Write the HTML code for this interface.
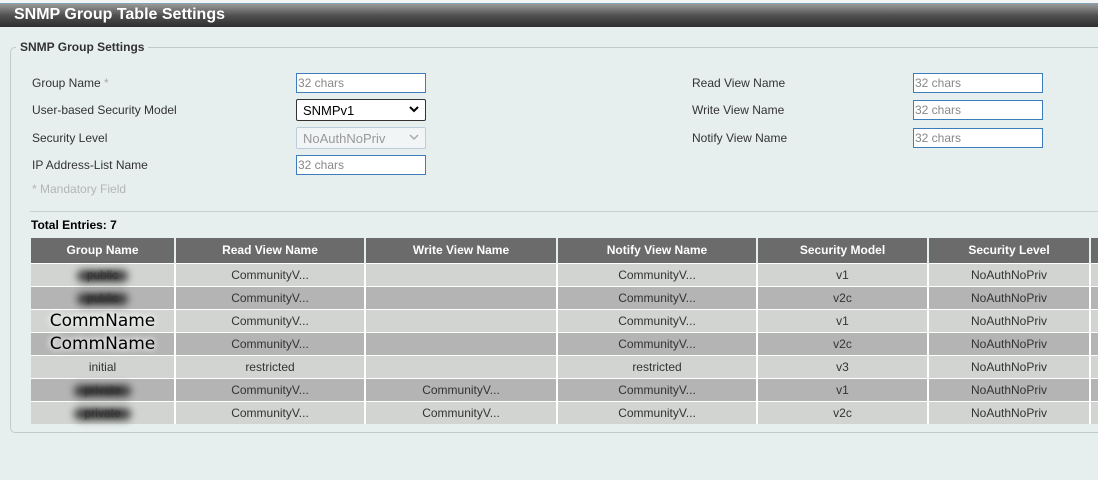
<!DOCTYPE html>
<html><head><meta charset="utf-8"><style>
*{margin:0;padding:0;box-sizing:border-box}
body{width:1098px;height:480px;background:#e6eeee;font-family:"Liberation Sans",Arial,sans-serif;font-size:12px;color:#333;position:relative;overflow:hidden}
.title{position:absolute;left:0;top:3px;width:1098px;height:24px;background:linear-gradient(#9a9a9a,#505050 50%,#2e2e2e);border-top:1px solid #7fa3b8}
.title span{position:absolute;left:14px;top:2px;color:#fff;font-weight:bold;font-size:16px}
.top{position:absolute;left:0;top:0;width:1098px;height:3px;background:#f4f4f4}
.fs{position:absolute;left:10px;top:47px;width:1100px;height:386px;border:1px solid #c0cccc;border-radius:5px}
.legend{position:absolute;left:16px;top:40px;background:#e6eeee;padding:0 4px;font-weight:bold;font-size:12px;color:#333}
.lbl{position:absolute;font-size:12px;color:#333}
.inp{position:absolute;width:130px;height:20px;border:1px solid #3c7dbd;background:#fff;font-size:12px;color:#888;padding:2px 1px}
.sel{position:absolute;width:130px;height:22px;border:1px solid #333;background:#fff;font-size:13px;color:#000;padding:3px 6px;border-radius:2px}
.sel.dis{border-color:#bcd;color:#999;background:#f2f5f5}
.chev{position:absolute;right:5px;top:4px}
.tot{position:absolute;left:30px;top:211px;width:1080px;height:27px;border-top:1px solid #c8d0d0;font-weight:bold;color:#000;padding:6px 1px}
table{position:absolute;left:31px;top:238px;border-collapse:collapse;font-size:12px;table-layout:fixed;width:1079px}
th{background:#6b6b6b;color:#fff;height:25px;font-weight:bold;border-right:2px solid #e6eeee}
td{height:23px;text-align:center;border-right:2px solid #fff;border-top:1px solid #fff;color:#333;overflow:visible;white-space:nowrap}
tr.a td{background:#d1d4d1}tr.b td{background:#b4b4b4}
.blur{display:inline-block;color:#777;position:relative;text-shadow:0 0 4px #222}
.blur:before{content:"";position:absolute;left:-10px;right:-10px;top:2px;bottom:0;background:#222;filter:blur(4px);border-radius:8px;opacity:.85;z-index:0}
.cn{font-family:"DejaVu Sans",sans-serif;font-size:17px;color:#000;text-shadow:0 0 6px #fff,0 0 8px #fff}
</style></head><body>
<div class="top"></div>
<div class="title"><span>SNMP Group Table Settings</span></div>
<div class="fs"></div>
<div class="legend">SNMP Group Settings</div>
<div class="lbl" style="left:32px;top:76px">Group Name <span style="color:#aaa">*</span></div>
<div class="lbl" style="left:32px;top:103px">User-based Security Model</div>
<div class="lbl" style="left:32px;top:131px">Security Level</div>
<div class="lbl" style="left:32px;top:158px">IP Address-List Name</div>
<div class="lbl" style="left:32px;top:182px;color:#b5b5b5">* Mandatory Field</div>
<div class="inp" style="left:296px;top:73px">32 chars</div>
<div class="sel" style="left:296px;top:99px">SNMPv1<svg class="chev" width="12" height="10" viewBox="0 0 12 10"><path d="M2 3l4 4 4-4" stroke="#000" stroke-width="2" fill="none"/></svg></div>
<div class="sel dis" style="left:296px;top:127px">NoAuthNoPriv<svg class="chev" width="12" height="10" viewBox="0 0 12 10"><path d="M2 3l4 4 4-4" stroke="#aaa" stroke-width="1.5" fill="none"/></svg></div>
<div class="inp" style="left:296px;top:155px">32 chars</div>
<div class="lbl" style="left:692px;top:76px">Read View Name</div>
<div class="lbl" style="left:692px;top:103px">Write View Name</div>
<div class="lbl" style="left:692px;top:131px">Notify View Name</div>
<div class="inp" style="left:913px;top:73px">32 chars</div>
<div class="inp" style="left:913px;top:100px">32 chars</div>
<div class="inp" style="left:913px;top:128px">32 chars</div>
<div class="tot">Total Entries: 7</div>
<table>
<colgroup><col style="width:144px"><col style="width:190px"><col style="width:192px"><col style="width:200px"><col style="width:171px"><col style="width:162px"><col style="width:20px"></colgroup>
<tr><th>Group Name</th><th>Read View Name</th><th>Write View Name</th><th>Notify View Name</th><th>Security Model</th><th>Security Level</th><th></th></tr>
<tr class="a"><td><span class="blur">public</span></td><td>CommunityV...</td><td></td><td>CommunityV...</td><td>v1</td><td>NoAuthNoPriv</td><td></td></tr>
<tr class="b"><td><span class="blur">public</span></td><td>CommunityV...</td><td></td><td>CommunityV...</td><td>v2c</td><td>NoAuthNoPriv</td><td></td></tr>
<tr class="a"><td><span class="cn">CommName</span></td><td>CommunityV...</td><td></td><td>CommunityV...</td><td>v1</td><td>NoAuthNoPriv</td><td></td></tr>
<tr class="b"><td><span class="cn">CommName</span></td><td>CommunityV...</td><td></td><td>CommunityV...</td><td>v2c</td><td>NoAuthNoPriv</td><td></td></tr>
<tr class="a"><td>initial</td><td>restricted</td><td></td><td>restricted</td><td>v3</td><td>NoAuthNoPriv</td><td></td></tr>
<tr class="b"><td><span class="blur">private</span></td><td>CommunityV...</td><td>CommunityV...</td><td>CommunityV...</td><td>v1</td><td>NoAuthNoPriv</td><td></td></tr>
<tr class="a"><td><span class="blur">private</span></td><td>CommunityV...</td><td>CommunityV...</td><td>CommunityV...</td><td>v2c</td><td>NoAuthNoPriv</td><td></td></tr>
</table>
</body></html>
